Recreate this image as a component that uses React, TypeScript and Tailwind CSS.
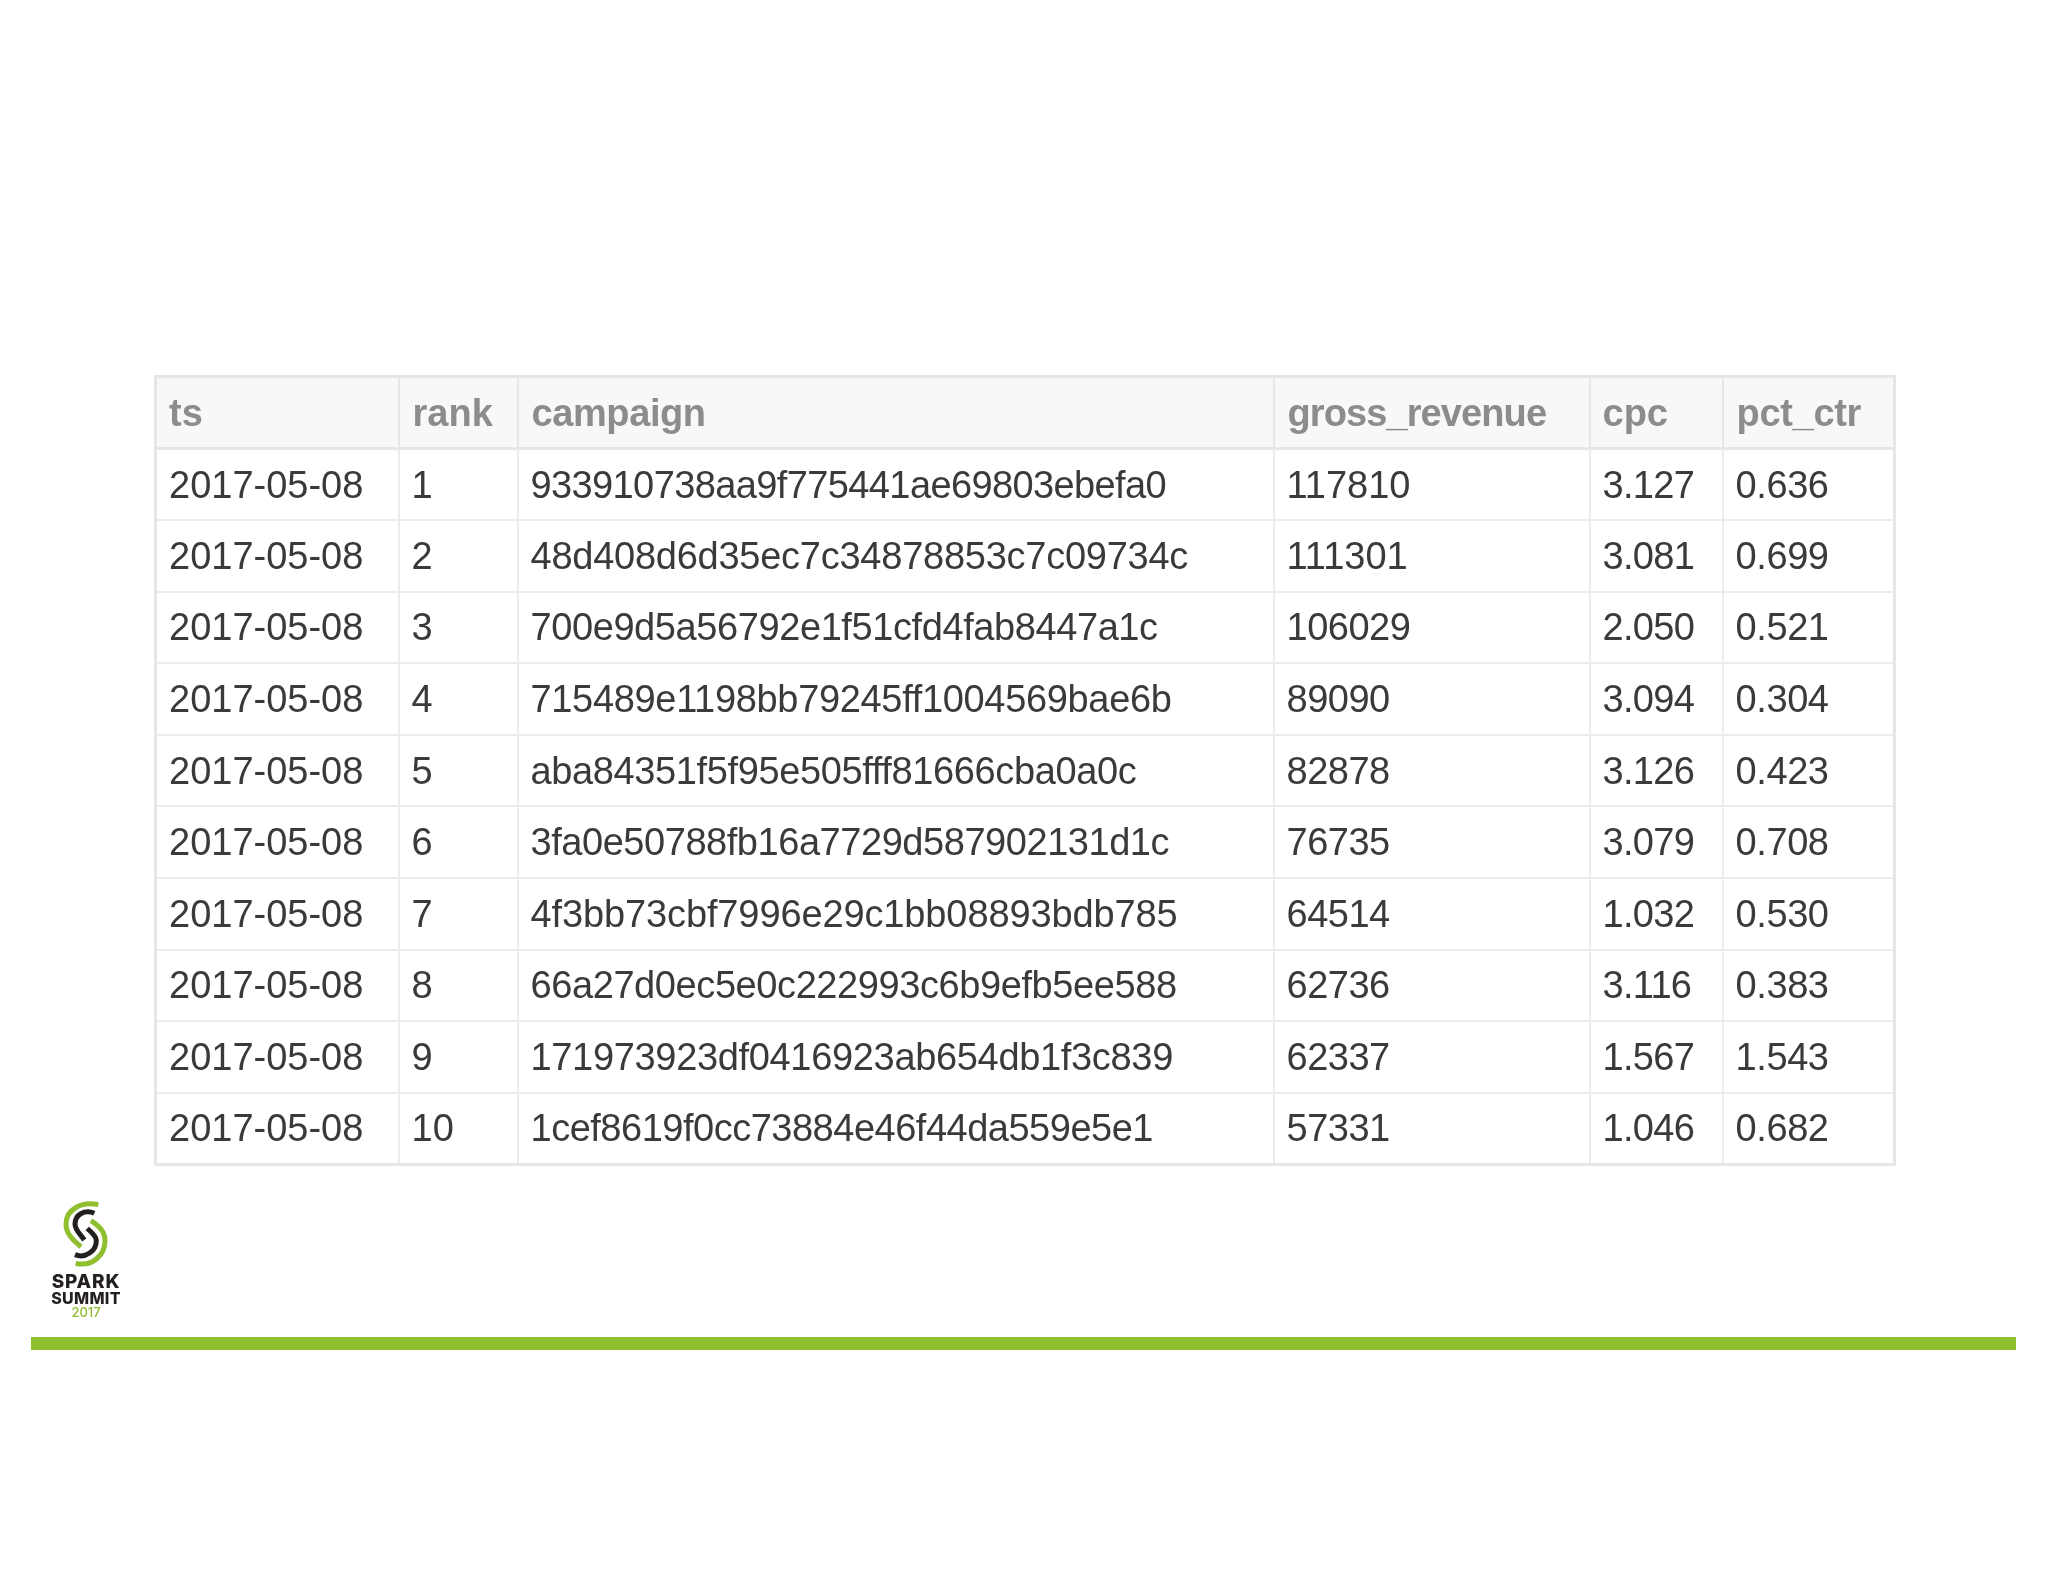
const rows = [
  ["1", "933910738aa9f775441ae69803ebefa0", "117810", "3.127", "0.636", "tracking-[-0.61px]", ""],
  ["2", "48d408d6d35ec7c34878853c7c09734c", "111301", "3.081", "0.699", "tracking-[-0.25px]", ""],
  ["3", "700e9d5a56792e1f51cfd4fab8447a1c", "106029", "2.050", "0.521", "tracking-[-0.41px]", "tracking-[-0.5px]"],
  ["4", "715489e1198bb79245ff1004569bae6b", "89090", "3.094", "0.304", "tracking-[-0.33px]", "tracking-[-0.5px]"],
  ["5", "aba84351f5f95e505fff81666cba0a0c", "82878", "3.126", "0.423", "tracking-[-0.37px]", "tracking-[-0.5px]"],
  ["6", "3fa0e50788fb16a7729d587902131d1c", "76735", "3.079", "0.708", "tracking-[-0.45px]", "tracking-[-0.5px]"],
  ["7", "4f3bb73cbf7996e29c1bb08893bdb785", "64514", "1.032", "0.530", "tracking-[-0.12px]", "tracking-[-0.5px]"],
  ["8", "66a27d0ec5e0c222993c6b9efb5ee588", "62736", "3.116", "0.383", "tracking-[-0.41px]", "tracking-[-0.5px]"],
  ["9", "171973923df0416923ab654db1f3c839", "62337", "1.567", "1.543", "tracking-[-0.33px]", "tracking-[-0.5px]"],
  ["10", "1cef8619f0cc73884e46f44da559e5e1", "57331", "1.046", "0.682", "tracking-[-0.49px]", "tracking-[-0.5px]"],
];
const heads = [
  ["ts", "pl-3"],
  ["rank", "pl-[13px]"],
  ["campaign", "pl-[13px] tracking-[-0.4px]"],
  ["gross_revenue", "pl-[13px] tracking-[-0.9px]"],
  ["cpc", "pl-3"],
  ["pct_ctr", "pl-[13px] tracking-[-0.3px]"],
];
const widths = ["w-[243px]", "w-[119px]", "w-[756px]", "w-[316px]", "w-[133px]", "w-[172px]"];
const cell = "border-2 border-[#ececec] px-3 pt-[1px]";

function Logo() {
  return (
    <svg width="70" height="80" viewBox="-12 0 210 240" fill="none" className="block">
      <path d="M130 32 C80 22 33 45 33 90 C33 120 55 140 78 158" stroke="#8fbf2f" strokeWidth="15" />
      <path d="M62 208 C115 220 150 180 150 140 C150 110 130 95 108 80" stroke="#8fbf2f" strokeWidth="15" />
      <path d="M118 58 C90 45 60 62 60 90 C60 108 75 120 88 138" stroke="#231f20" strokeWidth="15" />
      <path d="M60 182 C92 195 124 170 124 140 C124 125 108 115 97 103" stroke="#231f20" strokeWidth="15" />
    </svg>
  );
}

export default function App() {
  return (
    <div className="h-[1582px] w-[2048px] bg-white pt-[375px] font-['Liberation_Sans',Arial,sans-serif]">
      <table className="ml-[154px] w-[1739px] table-fixed border-collapse border-[3px] border-[#e6e6e6] text-[38px] text-[#3a3a3a] blur-[0.5px]">
        <colgroup>
          {widths.map((w) => (
            <col key={w} className={w} />
          ))}
        </colgroup>
        <thead>
          <tr className="h-[72px] bg-[#f8f8f8]">
            {heads.map(([h, t]) => (
              <th key={h} className={`border-2 border-b-[3px] border-[#e6e6e6] pt-[2px] pr-3 text-left font-bold text-[#8c8c8c] ${t}`}>
                {h}
              </th>
            ))}
          </tr>
        </thead>
        <tbody>
          {rows.map((r) => (
            <tr key={r[0]} className="h-[71.6px]">
              <td className={cell}>2017-05-08</td>
              <td className={cell}>{r[0]}</td>
              <td className={`${cell} ${r[5]}`}>{r[1]}</td>
              <td className={`${cell} ${r[6]}`}>{r[2]}</td>
              <td className={`${cell} tracking-[-0.7px]`}>{r[3]}</td>
              <td className={`${cell} tracking-[-0.4px]`}>{r[4]}</td>
            </tr>
          ))}
        </tbody>
      </table>
      <div className="mt-[28px] ml-[50px] flex w-[72px] flex-col items-center font-['Inter',sans-serif] font-extrabold text-[#231f20] blur-[0.3px]">
        <Logo />
        <div className="text-[19px] leading-[16px] tracking-[0.8px]">SPARK</div>
        <div className="text-[16px] leading-[16px] tracking-[0.3px]">SUMMIT</div>
        <div className="text-[13px] leading-[13px] font-medium text-[#8fbf2f]">2017</div>
      </div>
      <div className="mt-[18px] ml-[31px] h-[13px] w-[1985px] bg-[#8fbf2f]" />
    </div>
  );
}
